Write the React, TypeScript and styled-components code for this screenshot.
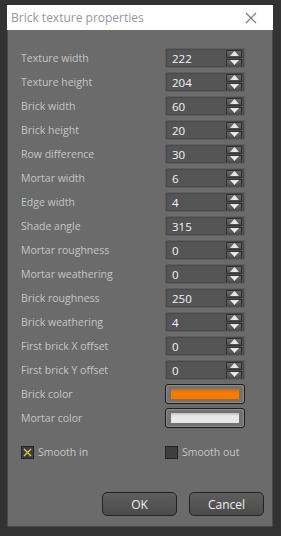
import styled, { createGlobalStyle } from "styled-components"

const GlobalStyle = createGlobalStyle`
  html, body {
    margin: 0;
    padding: 0;
    background: #333333;
  }
  body {
    font-family: "Open Sans", "Noto Sans", sans-serif;
  }
`

const spinRows: [string, string][] = [
  ["Texture width", "222"],
  ["Texture height", "204"],
  ["Brick width", "60"],
  ["Brick height", "20"],
  ["Row difference", "30"],
  ["Mortar width", "6"],
  ["Edge width", "4"],
  ["Shade angle", "315"],
  ["Mortar roughness", "0"],
  ["Mortar weathering", "0"],
  ["Brick roughness", "250"],
  ["Brick weathering", "4"],
  ["First brick X offset", "0"],
  ["First brick Y offset", "0"],
]

const Arrow = ({ down }: { down?: boolean }) => (
  <svg width="9" height="5" viewBox="0 0 9 5">
    <polygon points={down ? "0,0 9,0 4.5,5" : "0,5 9,5 4.5,0"} fill="#e6e6e6" />
  </svg>
)

const App = () => {
  return (
    <Page>
      <GlobalStyle />
      <Dialog>
        <TitleBar>
          <Title>Brick texture properties</Title>
          <svg width="12" height="12" viewBox="0 0 12 12">
            <path d="M1 1L11 11M11 1L1 11" stroke="#7a7a7a" strokeWidth="1.2" />
          </svg>
        </TitleBar>
        <Body>
          <Form>
            {spinRows.map(([label, value]) => (
              <Row key={label}>
                <Label>{label}</Label>
                <SpinBox>
                  <SpinValue>{value}</SpinValue>
                  <SpinButtons>
                    <SpinButton><Arrow /></SpinButton>
                    <SpinButton><Arrow down /></SpinButton>
                  </SpinButtons>
                </SpinBox>
              </Row>
            ))}
            <Row>
              <Label>Brick color</Label>
              <ColorButton>
                <Swatch $from="#d86500" $to="#f47c00" />
              </ColorButton>
            </Row>
            <Row>
              <Label>Mortar color</Label>
              <ColorButton>
                <Swatch $from="#bdbdbd" $to="#e8e8e8" />
              </ColorButton>
            </Row>
          </Form>
          <CheckRow>
            <Check>
              <CheckBox>
                <svg width="11" height="11" viewBox="0 0 11 11">
                  <path d="M2 2L9 9M9 2L2 9" stroke="#e6d24a" strokeWidth="1.1" />
                </svg>
              </CheckBox>
              <Label>Smooth in</Label>
            </Check>
            <Check>
              <CheckBox />
              <Label>Smooth out</Label>
            </Check>
          </CheckRow>
          <Buttons>
            <Button>OK</Button>
            <Button>Cancel</Button>
          </Buttons>
        </Body>
      </Dialog>
    </Page>
  )
}

const Page = styled.div`
  width: 281px;
  height: 536px;
  padding: 5px 0 0 7px;
  box-sizing: border-box;
  background: #333333;
`

const Dialog = styled.div`
  width: 266px;
  height: 522px;
  box-sizing: border-box;
  border: 1px solid #4a4a4a;
  border-top: none;
  background: #6b6b6b;
  display: flex;
  flex-direction: column;
`

const TitleBar = styled.div`
  height: 25px;
  background: #ffffff;
  display: flex;
  align-items: center;
  justify-content: space-between;
  padding: 0 16px 0 4px;
  margin: 0 -1px;
`

const Title = styled.span`
  font-size: 12px;
  color: #9595a5;
`

const Body = styled.div`
  flex: 1;
  display: flex;
  flex-direction: column;
  padding: 16px 26px 10px 13px;
`

const Form = styled.div`
  display: flex;
  flex-direction: column;
`

const Row = styled.div`
  height: 24px;
  display: grid;
  grid-template-columns: 144px 80px;
  align-items: center;
`

const Label = styled.span`
  font-size: 10.5px;
  color: #c6c6c6;
  white-space: nowrap;
`

const SpinBox = styled.div`
  height: 20px;
  box-sizing: border-box;
  border: 1px solid #5e5e5e;
  outline: 1px solid #4a4a4a;
  outline-offset: -2px;
  background: #545454;
  display: flex;
  align-items: center;
  justify-content: space-between;
  padding: 0 2px 0 6px;
`

const SpinValue = styled.span`
  font-size: 11.5px;
  color: #f4f4f4;
`

const SpinButtons = styled.div`
  display: flex;
  flex-direction: column;
  gap: 1px;
`

const SpinButton = styled.div`
  width: 16px;
  height: 8px;
  box-sizing: border-box;
  border: 1px solid #2e2e2e;
  background: linear-gradient(#6a6a6a, #4e4e4e);
  display: flex;
  align-items: center;
  justify-content: center;
`

const ColorButton = styled.div`
  height: 20px;
  box-sizing: border-box;
  border: 1px solid #1c1c1c;
  border-radius: 3px;
  box-shadow: inset 0 0 0 1px #8c8c8c;
  background: #727272;
  padding: 4px 5px;
  display: flex;
`

const Swatch = styled.div<{ $from: string; $to: string }>`
  flex: 1;
  background: linear-gradient(${p => p.$from}, ${p => p.$to} 30%, ${p => p.$to});
`

const CheckRow = styled.div`
  margin-top: 15px;
  display: grid;
  grid-template-columns: 144px 100px;
  align-items: center;
`

const Check = styled.div`
  display: flex;
  align-items: center;
  gap: 4px;
`

const CheckBox = styled.div`
  width: 13px;
  height: 13px;
  box-sizing: border-box;
  border: 1px solid #242424;
  background: #3e3e3e;
  display: flex;
  align-items: center;
  justify-content: center;
`

const Buttons = styled.div`
  margin-top: auto;
  display: flex;
  justify-content: flex-end;
  gap: 12px;
  margin-right: -18px;
`

const Button = styled.button`
  width: 75px;
  height: 24px;
  border: 1px solid #222222;
  border-radius: 5px;
  background: linear-gradient(#5e5e5e, #4b4b4b);
  color: #f0f0f0;
  font-family: "Open Sans", "Noto Sans", sans-serif;
  font-size: 12px;
  padding: 0;
`

export default App
